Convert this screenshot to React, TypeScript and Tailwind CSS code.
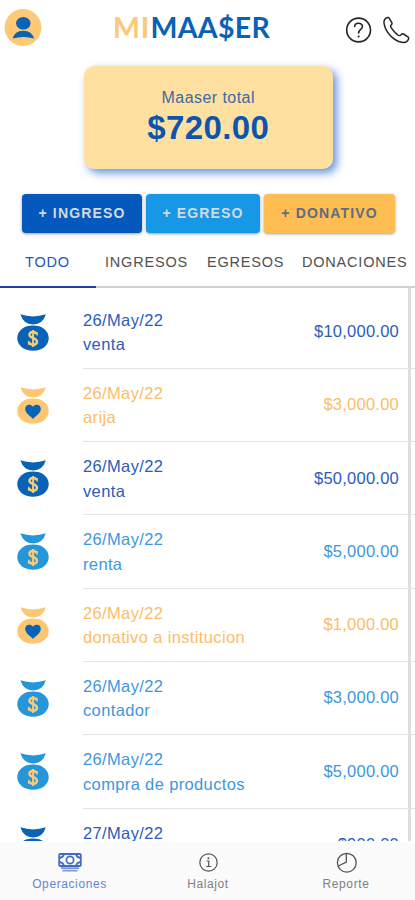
import React from "react";

type Kind = "ingreso" | "egreso" | "donativo";

const tone: Record<Kind, { text: string; bag: string; mark: string }> = {
  ingreso: { text: "text-[#2a5cbd]", bag: "#0862b5", mark: "#f8cb78" },
  egreso: { text: "text-[#3d97de]", bag: "#2596da", mark: "#f8cb78" },
  donativo: { text: "text-[#fbbd68]", bag: "#fdc673", mark: "#0862b5" },
};

const rows: { date: string; name: string; amount: string; kind: Kind }[] = [
  { date: "26/May/22", name: "venta", amount: "$10,000.00", kind: "ingreso" },
  { date: "26/May/22", name: "arija", amount: "$3,000.00", kind: "donativo" },
  { date: "26/May/22", name: "venta", amount: "$50,000.00", kind: "ingreso" },
  { date: "26/May/22", name: "renta", amount: "$5,000.00", kind: "egreso" },
  { date: "26/May/22", name: "donativo a institucion", amount: "$1,000.00", kind: "donativo" },
  { date: "26/May/22", name: "contador", amount: "$3,000.00", kind: "egreso" },
  { date: "26/May/22", name: "compra de productos", amount: "$5,000.00", kind: "egreso" },
  { date: "27/May/22", name: "", amount: "$900.00", kind: "ingreso" },
];

function Bag({ kind }: { kind: Kind }) {
  const c = tone[kind];
  return (
    <svg width="32" height="38" viewBox="0 0 32 38" className="block">
      <path d="M3.4 0.3Q16 4.6 28.8 0.3Q26 10.4 16.1 10.4Q6.4 10.4 3.4 0.3Z" fill={c.bag} />
      <path d="M9.8 12.3Q16 10.9 22.2 12.3C28 14.2 31.7 18.8 31.7 24.3C31.7 31.5 25 36.8 16 36.8S.3 31.5 .3 24.3C.3 18.8 4 14.2 9.8 12.3Z" fill={c.bag} />
      {kind === "donativo" ? (
        <path d="M16 32C13.5 29 8.2 26.5 8.2 21.8C8.2 17.6 13.3 16.2 16 19.7C18.7 16.2 23.8 17.6 23.8 21.8C23.8 26.5 18.5 29 16 32Z" fill={c.mark} />
      ) : (
        <g fill="none" stroke={c.mark}>
          <path d="M20 20.3C18.5 17.3 12.5 17.2 12.5 21C12.5 24.5 20 23.4 20 27.7C20 31.8 13 31.4 11.7 28" strokeWidth="2.5" />
          <path d="M16.1 16V33" strokeWidth="2" />
          <path d="M20.1 17.9V21.7M11.7 26.8V30.7" strokeWidth="1.2" />
        </g>
      )}
    </svg>
  );
}

function Row({ date, name, amount, kind }: (typeof rows)[number]) {
  return (
    <div className={`flex h-[73.3px] shrink-0 ${tone[kind].text}`}>
      <div className="w-[83px] shrink-0 pl-[17px] pt-[18px]">
        <Bag kind={kind} />
      </div>
      <div className="flex flex-1 justify-between border-b border-[#e3e3e3] pr-[16px] text-[16.5px] whitespace-nowrap">
        <div className="pt-[12px] leading-[24.5px] tracking-[0.36px]">
          <div>{date}</div>
          <div>{name}</div>
        </div>
        <div className="pt-[23.5px] leading-[24.5px] tracking-[0.24px]">{amount}</div>
      </div>
    </div>
  );
}

export default function App() {
  return (
    <div className="flex h-[900px] w-[415px] flex-col overflow-hidden bg-white font-['Liberation_Sans',Arial,sans-serif]">
      <header className="flex h-[66px] shrink-0 items-start">
        <svg width="38" height="38" viewBox="0 0 38 38" className="mt-[9px] ml-[4px] shrink-0">
          <circle cx="19" cy="18.5" r="18.4" fill="#fdc976" />
          <ellipse cx="19.3" cy="14.3" rx="7.2" ry="6.3" fill="#0862b5" />
          <path d="M8.8 29.5C10 24.8 13.5 21.8 19.3 21.8S28.8 24.8 30 29.5Q19.3 26.5 8.8 29.5Z" fill="#0862b5" />
        </svg>
        <h1 className="mt-[8px] ml-[71px] flex w-[230px] text-[28.5px] leading-[38px] font-bold whitespace-nowrap text-[#0862b5] font-['Lato',sans-serif]">
          <span className="w-[37.5px] tracking-[0.8px] text-[#fdc976]">MI</span>
          <span className="tracking-[0.3px]">MAA$ER</span>
        </h1>
        <svg width="28" height="28" viewBox="0 0 28 28" fill="none" stroke="#242424" strokeWidth="1.6" className="mt-[16px] ml-[2px] shrink-0">
          <circle cx="13.6" cy="14" r="11.9" />
          <path d="M9.7 10.4C9.8 6.3 17.5 6.2 17.5 10.4C17.5 13.4 13.6 13.5 13.6 17" strokeLinecap="round" />
          <circle cx="13.6" cy="20.5" r="1.1" fill="#242424" stroke="none" />
        </svg>
        <svg width="28" height="28" viewBox="0 0 28 28" fill="none" stroke="#242424" strokeWidth="1.5" strokeLinejoin="round" className="mt-[16px] ml-[9px] shrink-0">
          <path d="M5.6 1.5C3.2 2.2 1.6 4.4 2.1 7.6C3.4 16 11.2 24.6 19.8 26.3C23.2 27 25.6 25.5 26.6 22.7C26.9 21.8 26.6 21.3 25.9 20.8L21.5 18C20.6 17.5 20.1 17.7 19.3 18.5C18 20 17.4 20.3 15.5 18.7C13 16.7 10.6 14.1 9.1 11.7C8.1 10 8.4 9.5 9.6 8.5C10.2 7.9 10.2 7.4 9.8 6.7L7.3 2.3C6.9 1.5 6.4 1.3 5.6 1.5Z" />
        </svg>
      </header>

      <section className="ml-[83.5px] flex h-[103px] w-[249.5px] shrink-0 flex-col items-center rounded-[10px] bg-[#fee1a1] pt-[20px] text-[#3f69a3] shadow-[4px_4px_8px_rgba(35,104,210,0.7)]">
        <div className="text-[16px] leading-[24px] tracking-[0.45px]">Maaser total</div>
        <div className="text-[33px] leading-[36px] font-bold tracking-[0.4px] text-[#0c55ae]">$720.00</div>
      </section>

      <div className="mt-[25px] ml-[22px] flex h-[39px] shrink-0 gap-[4px] text-[14px] font-bold tracking-[1.15px] whitespace-nowrap">
        <button className="w-[120px] rounded-[4px] bg-[#0559bd] text-[#d3dade] shadow-[0_1px_3px_rgba(0,0,0,0.4)]">+ INGRESO</button>
        <button className="w-[114px] rounded-[4px] bg-[#1698e7] text-[#d3dade] shadow-[0_1px_3px_rgba(0,0,0,0.4)]">+ EGRESO</button>
        <button className="w-[131px] rounded-[4px] bg-[#ffbd52] text-[#5d6c80] shadow-[0_1px_3px_rgba(0,0,0,0.4)]">+ DONATIVO</button>
      </div>

      <nav className="flex h-[55px] shrink-0 border-b-2 border-[#d0d0d0] text-[14.5px] leading-[20px] tracking-[0.8px] whitespace-nowrap text-[#505050]">
        <div className="-mb-[2px] w-[95.5px] border-b-2 border-[#1741a8] pt-[18.5px] pl-[25px] text-[#2456b8]">TODO</div>
        <div className="w-[111.5px] pt-[18.5px] pl-[9.5px]">INGRESOS</div>
        <div className="w-[95px] pt-[18.5px]">EGRESOS</div>
        <div className="pt-[18.5px]">DONACIONES</div>
      </nav>

      <main className="flex min-h-0 flex-1 overflow-hidden">
        <div className="flex h-full w-[415px] shrink-0 flex-col overflow-hidden pt-[7.5px]">
          {rows.map((row, i) => (
            <Row key={i} {...row} />
          ))}
        </div>
        <div className="-ml-[7px] w-[3px] shrink-0 bg-[#dedede]" />
      </main>

      <footer className="flex h-[59px] shrink-0 bg-[#fbfbfb] text-[12px] tracking-[0.6px] text-[#808080]">
        <div className="flex w-[139px] flex-col items-center pt-[11px] text-[#6484d3]">
          <svg width="24" height="21" viewBox="0 0 24 21" fill="none" stroke="#426bc4">
            <rect x="1.2" y="2" width="21.6" height="12" rx="1" strokeWidth="1.8" />
            <circle cx="12" cy="8" r="3.6" strokeWidth="1.7" />
            <path d="M1 6Q5.5 5.5 6 2M18 2Q18.5 5.5 23 6M1 10Q5.5 10.5 6 14M18 14Q18.5 10.5 23 10" strokeWidth="1.8" />
            <path d="M3 16.2H21M4.5 18.6H19.5" stroke="#7d98d8" strokeWidth="1.7" />
          </svg>
          <div className="leading-[22px]">Operaciones</div>
        </div>
        <div className="flex w-[138px] flex-col items-center pt-[11px]">
          <svg width="21" height="21" viewBox="0 0 21 21" fill="none" stroke="#555" strokeWidth="1.2">
            <circle cx="10.5" cy="10.5" r="8.7" />
            <path d="M8.5 9H10.7V14.5M8.2 14.5H13.2" />
            <circle cx="10.4" cy="6.2" r="1" fill="#555" stroke="none" />
          </svg>
          <div className="leading-[22px]">Halajot</div>
        </div>
        <div className="flex w-[138px] flex-col items-center pt-[11px]">
          <svg width="23" height="21" viewBox="0 0 23 21" fill="none" stroke="#555" strokeWidth="1.3" strokeLinejoin="round">
            <circle cx="11.8" cy="10.7" r="9.4" />
            <path d="M11.3 1.3V10.2L3.2 14" />
          </svg>
          <div className="leading-[22px]">Reporte</div>
        </div>
      </footer>
    </div>
  );
}
